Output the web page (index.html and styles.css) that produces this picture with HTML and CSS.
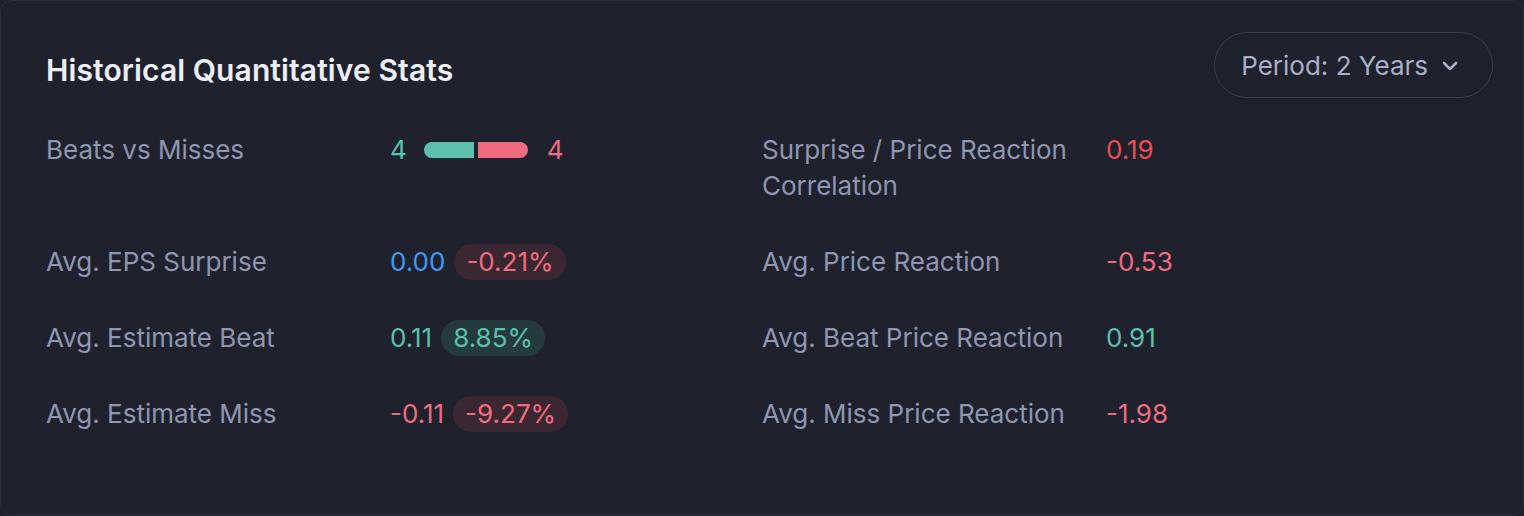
FILE: index.html
```html
<!DOCTYPE html>
<html>
<head>
<meta charset="utf-8">
<link rel="stylesheet" href="styles.css">
</head>
<body>
<section class="card">
  <header class="card-head">
    <h2 class="title">Historical Quantitative Stats</h2>
    <button class="period">Period: 2 Years
      <svg class="chev" width="16" height="10" viewBox="0 0 16 10"><path d="M2 2 L8 8 L14 2" fill="none" stroke="currentColor" stroke-width="2.6" stroke-linecap="round" stroke-linejoin="round"/></svg>
    </button>
  </header>
  <div class="grid">
    <div class="stat">
      <div class="label">Beats vs Misses</div>
      <div class="value">
        <span class="green">4</span>
        <span class="bar"><span class="seg seg-g"></span><span class="seg seg-r"></span></span>
        <span class="red">4</span>
      </div>
    </div>
    <div class="stat">
      <div class="label">Surprise / Price Reaction Correlation</div>
      <div class="value"><span class="bright-red">0.19</span></div>
    </div>

    <div class="stat">
      <div class="label">Avg. EPS Surprise</div>
      <div class="value"><span class="blue">0.00</span><span class="pill pill-red">-0.21%</span></div>
    </div>
    <div class="stat">
      <div class="label">Avg. Price Reaction</div>
      <div class="value"><span class="red">-0.53</span></div>
    </div>

    <div class="stat">
      <div class="label">Avg. Estimate Beat</div>
      <div class="value"><span class="green">0.11</span><span class="pill pill-green">8.85%</span></div>
    </div>
    <div class="stat">
      <div class="label">Avg. Beat Price Reaction</div>
      <div class="value"><span class="green">0.91</span></div>
    </div>

    <div class="stat">
      <div class="label">Avg. Estimate Miss</div>
      <div class="value"><span class="red">-0.11</span><span class="pill pill-red">-9.27%</span></div>
    </div>
    <div class="stat">
      <div class="label">Avg. Miss Price Reaction</div>
      <div class="value"><span class="red">-1.98</span></div>
    </div>
  </div>
</section>
</body>
</html>
```

FILE: styles.css
```css
* { box-sizing: border-box; }
html, body {
  margin: 0;
  padding: 0;
  background: #1f222d;
}
body {
  font-family: Inter, "Noto Sans", sans-serif;
  width: 1524px;
  height: 516px;
  overflow: hidden;
}
.card {
  width: 1524px;
  height: 516px;
  background: #1f222d;
  border: 1px solid #2b2f3b;
  border-radius: 12px;
  padding: 31px 30px 0 45px;
}
.card-head {
  display: flex;
  justify-content: space-between;
  align-items: center;
  height: 66px;
  margin-bottom: 34px;
}
.title {
  margin: 10px 0 0 0;
  font-size: 30px;
  font-weight: 600;
  color: #eceef6;
  letter-spacing: 0.1px;
}
.period {
  display: flex;
  align-items: center;
  gap: 14px;
  height: 66px;
  padding: 0 34px 0 26px;
  border: 1.5px solid #3a3e4b;
  border-radius: 33px;
  background: transparent;
  color: #a8afc7;
  font-family: Inter, "Noto Sans", sans-serif;
  font-size: 26px;
  font-weight: 400;
}
.chev { display: block; margin-top: 2px; }
.grid {
  display: grid;
  grid-template-columns: 716px 1fr;
  row-gap: 40px;
}
.stat {
  display: grid;
  grid-template-columns: 344px 1fr;
  font-size: 26px;
  line-height: 36px;
}
.label {
  color: #8e96b1;
  padding-right: 30px;
}
.value {
  display: flex;
  align-items: flex-start;
  gap: 9px;
}
.green { color: #5bc0ae; }
.red { color: #f06b80; }
.bright-red { color: #f04a50; }
.blue { color: #3d9bf2; }
.bar {
  display: flex;
  gap: 4px;
  margin: 10px 10px 0 8px;
  height: 16px;
}
.seg { width: 50px; height: 16px; display: block; }
.seg-g { background: #5bc0ae; border-radius: 8px 0 0 8px; }
.seg-r { background: #f06b80; border-radius: 0 8px 8px 0; }
.pill {
  padding: 0 12px;
  border-radius: 18px;
  height: 36px;
}
.pill-red { background: #3b2731; color: #f06b80; }
.pill-green { background: #243a3c; color: #5bc0ae; }
```
